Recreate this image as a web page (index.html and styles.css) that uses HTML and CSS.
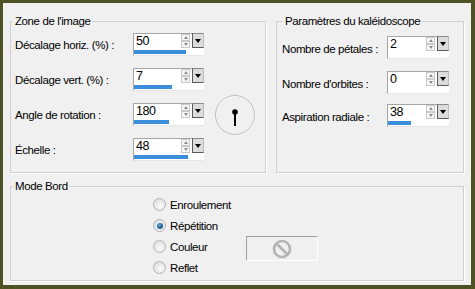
FILE: index.html
```html
<!DOCTYPE html>
<html lang="fr">
<head>
<meta charset="utf-8">
<link rel="stylesheet" href="styles.css">
</head>
<body>
<div class="frame">
  <div class="top">
    <fieldset class="group zone">
      <legend>Zone de l'image</legend>
      <div class="zone-body">
        <div class="rows">
          <div class="row">
            <span class="lbl">Décalage horiz. (%) :</span>
            <div class="spin">
              <div class="spin-top"><span class="val">50</span><span class="arrows"><i class="up"></i><i class="down"></i></span><span class="drop"></span></div>
              <div class="track"><div class="bar" style="width:52px"></div></div>
            </div>
          </div>
          <div class="row">
            <span class="lbl">Décalage vert. (%) :</span>
            <div class="spin">
              <div class="spin-top"><span class="val">7</span><span class="arrows"><i class="up"></i><i class="down"></i></span><span class="drop"></span></div>
              <div class="track"><div class="bar" style="width:38px"></div></div>
            </div>
          </div>
          <div class="row">
            <span class="lbl">Angle de rotation :</span>
            <div class="spin">
              <div class="spin-top"><span class="val">180</span><span class="arrows"><i class="up"></i><i class="down"></i></span><span class="drop"></span></div>
              <div class="track"><div class="bar" style="width:35px"></div></div>
            </div>
          </div>
          <div class="row">
            <span class="lbl">Échelle :</span>
            <div class="spin">
              <div class="spin-top"><span class="val">48</span><span class="arrows"><i class="up"></i><i class="down"></i></span><span class="drop"></span></div>
              <div class="track"><div class="bar" style="width:54px"></div></div>
            </div>
          </div>
        </div>
        <div class="dial">
          <svg width="44" height="44" viewBox="0 0 44 44">
            <circle cx="22.5" cy="22.5" r="19.5" fill="none" stroke="#ffffff" stroke-width="1"/>
            <circle cx="22" cy="22" r="19.5" fill="none" stroke="#bdbdbd" stroke-width="1"/>
            <line x1="22" y1="19" x2="22" y2="33" stroke="#000" stroke-width="2"/>
            <circle cx="22" cy="19" r="2.8" fill="#000"/>
          </svg>
        </div>
      </div>
    </fieldset>
    <fieldset class="group params">
      <legend>Paramètres du kaléidoscope</legend>
      <div class="prow r1">
        <span class="lbl">Nombre de pétales :</span>
        <div class="spin small">
          <div class="spin-top"><span class="val">2</span><span class="arrows"><i class="up"></i><i class="down"></i></span><span class="drop"></span></div>
          <div class="track"></div>
        </div>
      </div>
      <div class="prow r2">
        <span class="lbl">Nombre d'orbites :</span>
        <div class="spin small">
          <div class="spin-top"><span class="val">0</span><span class="arrows"><i class="up"></i><i class="down"></i></span><span class="drop"></span></div>
          <div class="track"></div>
        </div>
      </div>
      <div class="prow r3">
        <span class="lbl">Aspiration radiale :</span>
        <div class="spin small">
          <div class="spin-top"><span class="val">38</span><span class="arrows"><i class="up"></i><i class="down"></i></span><span class="drop"></span></div>
          <div class="track"><div class="bar" style="width:23px"></div></div>
        </div>
      </div>
    </fieldset>
  </div>
  <fieldset class="group bord">
    <legend>Mode Bord</legend>
    <div class="bord-body">
      <div class="radios">
        <label class="radio"><span class="dot"></span>Enroulement</label>
        <label class="radio"><span class="dot on"></span>Répétition</label>
        <label class="radio"><span class="dot"></span>Couleur</label>
        <label class="radio"><span class="dot"></span>Reflet</label>
      </div>
      <div class="color-box">
        <svg width="22" height="22" viewBox="0 0 22 22">
          <circle cx="11" cy="11" r="8" fill="none" stroke="#b4b4b4" stroke-width="2.6"/>
          <line x1="5.5" y1="5.5" x2="16.5" y2="16.5" stroke="#b4b4b4" stroke-width="2.6"/>
        </svg>
      </div>
    </div>
  </fieldset>
</div>
</body>
</html>
```
FILE: styles.css
```css
html, body {
  margin: 0;
  padding: 0;
  background: #4c5224;
}

.frame {
  width: 475px;
  height: 289px;
  box-sizing: border-box;
  border-style: solid;
  border-color: #4c5224;
  border-width: 3px 4px 4px 3px;
  background: #f0f0f0;
  padding: 11px 7px 4px 7px;
  font-family: "Liberation Sans", Arial, sans-serif;
  font-size: 11.5px;
  letter-spacing: -0.4px;
  color: #000;
  white-space: nowrap;
}

.top {
  display: flex;
  gap: 10px;
}

.group {
  margin: 0;
  min-width: 0;
  border: 1px solid #d0d0d0;
  box-shadow: 1px 1px 0 #ffffff;
}

.group legend {
  padding: 0 2px;
  margin-left: -2px;
  line-height: 14px;
}

.zone {
  width: 256px;
  box-sizing: border-box;
  padding: 5px 4px 11px 4px;
}

.params {
  flex: 1;
  padding: 8px 5px 0 5px;
}

.params legend {
  margin-left: 1px;
}

.zone-body {
  display: flex;
  align-items: flex-start;
}

.rows {
  display: flex;
  flex-direction: column;
  gap: 12px;
}

.row {
  display: flex;
  align-items: center;
  height: 23px;
}

.row .lbl {
  width: 118px;
  line-height: 14px;
  padding-top: 1px;
}

.prow {
  display: flex;
  align-items: center;
  height: 23px;
}

.prow .lbl {
  width: 105px;
  line-height: 14px;
  padding-top: 2px;
}

.prow.r2 {
  margin-top: 12px;
}

.prow.r3 {
  margin-top: 10px;
}

.spin {
  width: 71px;
  height: 23px;
  box-sizing: border-box;
  background: #ffffff;
  border-left: 1px solid #a6a6a6;
  border-top: 1px solid #a6a6a6;
  border-bottom: 1px solid #e6e6e6;
  display: flex;
  flex-direction: column;
}

.spin.small {
  width: 62px;
}

.spin-top {
  display: flex;
  height: 15px;
}

.val {
  flex: 1;
  font-size: 12.5px;
  letter-spacing: -0.5px;
  line-height: 14px;
  padding-left: 2px;
}

.arrows {
  width: 9px;
  display: flex;
  flex-direction: column;
  margin-right: 2px;
}

.arrows i {
  display: block;
  height: 7px;
  box-sizing: border-box;
  border: 1px solid #c9c9c9;
  background: #f6f6f6;
  position: relative;
}

.arrows i::after {
  content: "";
  position: absolute;
  left: 1.5px;
  border-left: 2.5px solid transparent;
  border-right: 2.5px solid transparent;
}

.arrows .up::after {
  top: 1px;
  border-bottom: 3px solid #8c8c8c;
}

.arrows .down::after {
  top: 1px;
  border-top: 3px solid #8c8c8c;
}

.drop {
  width: 12px;
  height: 15px;
  box-sizing: border-box;
  margin-top: -1px;
  background: #dcdcdc;
  border-left: 1px solid #5a5a5a;
  border-bottom: 1px solid #5a5a5a;
  border-top: 1px solid #8a8a8a;
  border-right: 1px solid #bdbdbd;
  position: relative;
}

.drop::after {
  content: "";
  position: absolute;
  left: 1.5px;
  top: 4.5px;
  border-left: 3.5px solid transparent;
  border-right: 3.5px solid transparent;
  border-top: 4px solid #000;
}

.track {
  margin-top: auto;
  margin-bottom: 1px;
  height: 4px;
}

.bar {
  height: 4px;
  background: #3d8ddd;
}

.dial {
  margin-left: 9px;
  margin-top: 60px;
  width: 44px;
  height: 44px;
}

.dial svg {
  display: block;
}

.bord {
  margin-top: 6px;
  padding: 1px 4px 2px 4px;
}

.bord-body {
  display: flex;
  align-items: flex-start;
}

.radios {
  margin-left: 138px;
  width: 93px;
  display: flex;
  flex-direction: column;
}

.radio {
  display: flex;
  align-items: center;
  height: 21px;
  line-height: 14px;
}

.dot {
  width: 13px;
  height: 13px;
  box-sizing: border-box;
  border-radius: 50%;
  border: 1px solid #b3b3b3;
  background: radial-gradient(circle at 60% 65%, #fbfbfb 0%, #e2e2e2 70%, #d0d0d0 100%);
  margin-right: 4px;
  position: relative;
}

.dot.on::after {
  content: "";
  position: absolute;
  left: 2.5px;
  top: 2.5px;
  width: 6px;
  height: 6px;
  border-radius: 50%;
  background: radial-gradient(circle at 40% 35%, #6fa8d4 0%, #1f6396 55%, #0f3f66 100%);
}

.color-box {
  margin-top: 42px;
  width: 72px;
  height: 25px;
  box-sizing: border-box;
  border: 1px solid;
  border-color: #a0a0a0 #ffffff #ffffff #a0a0a0;
  display: flex;
  align-items: center;
  justify-content: center;
}

.color-box svg {
  display: block;
}
```
